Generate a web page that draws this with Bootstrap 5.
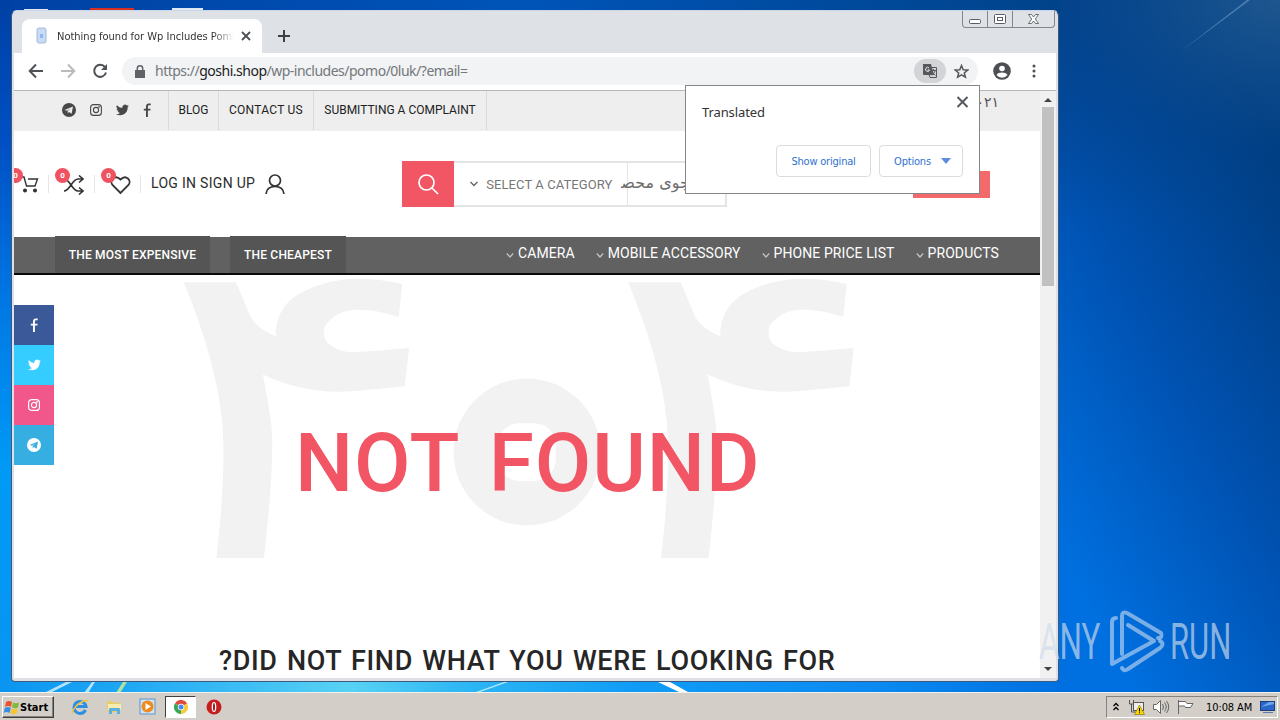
<!DOCTYPE html>
<html lang="en">
<head>
  <meta charset="UTF-8" />
  <meta name="viewport" content="width=device-width, initial-scale=1.0" />
  <title>Nothing found for Wp Includes Pomo</title>
  <link href="https://cdn.jsdelivr.net/npm/bootstrap@5.3.0/dist/css/bootstrap.min.css" rel="stylesheet" />
  <style>
    body {
      width: 1280px;
      height: 720px;
      overflow: hidden;
      font-family: Roboto, "DejaVu Sans", sans-serif;
      font-size: 14px;
      line-height: 1;
      color: #222;
      white-space: nowrap;
    }
    svg { display: block; flex: none; }
    .desktop { width: 1280px; height: 720px; }
    .wallpaper { z-index: 0; }
    .ui-font { font-family: "DejaVu Sans Condensed", "DejaVu Sans", sans-serif; }

    /* browser window */
    .win {
      width: 1048px; height: 672px; margin: 10px 0 0 11px;
      background: #dfe0e3; border: 1px solid #3c5a80; border-top-color: #c9d6ea;
      border-radius: 6px 6px 4px 4px; padding: 0 2px 3px 2px; z-index: 1;
    }
    .tabstrip { height: 42px; background: #dee1e6; border-radius: 5px 5px 0 0; }
    .tab { width: 240px; height: 34px; margin: 8px 0 0 8px; border-radius: 8px 8px 0 0; background: #fff; padding: 0 10px 0 13px; }
    .tab-title { width: 177px; font-size: 11px; line-height: 16px; padding-top: 1px; margin-left: 9px; color: #333; -webkit-mask-image: linear-gradient(90deg, #000 88%, transparent); }
    .caption { top: 0; right: 1px; width: 93px; height: 17px; border: 1px solid #84878d; border-top: 0; border-radius: 0 0 4px 4px; }
    .caption > div { width: 25px; border-right: 1px solid #84878d; }
    .caption > div:last-child { width: 42px; border-right: 0; }
    .toolbar { height: 38px; background: #fff; border-bottom: 1px solid #b6b6b6; padding-bottom: 1px; }
    .omnibox { width: 856px; height: 28px; margin-left: 14px; border-radius: 14px; background: #f1f3f4; padding: 0 9px 0 13px; }
    .url { font-family: "Noto Sans", sans-serif; font-size: 14px; letter-spacing: -.5px; color: #74777b; margin-left: 10px; }
    .url b { font-weight: 400; color: #222; }
    .translate-chip { width: 32px; height: 24px; border-radius: 12px; background: #d2d4d6; }

    /* page */
    .page { width: 1026px; height: 587px; background: #fff; }
    .topbar { height: 40px; background: #eee; font-size: 12px; }
    .topbar .cell { border-right: 1px solid #dadada; height: 39px; padding-bottom: 1px; }
    .socials { width: 155px; padding-left: 48px; gap: 14px; }
    .phone { margin-right: 41px; padding-top: 4px; font: 14px "DejaVu Sans", sans-serif; line-height: 14px; color: #555; }
    .head { height: 106px; }
    .count { width: 15px; height: 15px; border-radius: 50%; background: #ef5361; color: #fff; font-size: 8px; font-weight: 700; top: -7px; left: 6px; }
    .tool { border-right: 1px solid #e6e6e6; height: 18px; width: 46px; padding-left: 15px; }
    .tool:first-child { width: 35px; padding-left: 7px; }
    .tool:first-child .count { left: -6px; }
    .login { margin: -3px 0 0 10px; letter-spacing: .3px; color: #2c2c2c; }
    .search { width: 325px; height: 46px; border: 2px solid #e4e4e4; border-left: 0; margin-left: 117px; }
    .search-btn { width: 52px; height: 46px; background: #f25563; margin-top: -2px; }
    .cat { width: 174px; height: 42px; border-right: 1px solid #e4e4e4; color: #777; font-size: 13px; padding-left: 16px; letter-spacing: .08px; }
    .field { width: 98px; height: 42px; margin-left: -7px; color: #6d6d6d; font: 16px "DejaVu Sans", sans-serif; line-height: 40px; }
    .logo-bar { width: 77px; height: 27px; background: #f26a6c; margin: 0 50px 0 auto; }
    .menubar { height: 38px; background: #616161; border-bottom: 2px solid #0a0a0a; color: #fff; padding: 0 41px; }
    .dark-btn { width: 155px; height: 37px; margin-top: -1px; background: #555; font-size: 12px; font-weight: 500; letter-spacing: .18px; }
    .dark-btn + .dark-btn { width: 116px; margin-left: 20px; }
    .menu { margin-top: -4px; letter-spacing: .08px; }
    .menu > div { margin-left: 21px; gap: 4px; }
    .share { top: 214px; left: 0; width: 40px; }
    .share > div { height: 40px; }
    .big { top: 184px; left: 0; }
    .not-found { color: #f25563; font-weight: 500; font-size: 82px; letter-spacing: .9px; word-spacing: 9px; margin: 146px 0 0 281px; line-height: 84px; }
    .did { font-weight: 500; font-size: 27px; letter-spacing: .63px; word-spacing: 2px; color: #262626; margin: 140px 0 0 205px; line-height: 32px; }

    .scroller { width: 16px; background: #f1f1f1; }
    .thumb { width: 12px; height: 179px; background: #c1c1c1; }

    .bubble { left: 673px; top: 74px; width: 295px; height: 109px; background: #fff; border: 1px solid #868686; z-index: 3; }
    .bubble-top { padding: 9px 10px 0 16px; }
    .bubble-title { font: 13px "Noto Sans", sans-serif; letter-spacing: -.1px; color: #333; padding-top: 8px; }
    .bubble-row { padding: 0 16px 16px 0; }
    .bubble-btn { width: 95px; height: 32px; border: 1px solid #dadce0; border-radius: 4px; color: #2f72d0; font-size: 11px; letter-spacing: -.2px; }
    .bubble-btn + .bubble-btn { width: 84px; gap: 10px; padding-left: 3px; }

    /* taskbar */
    .taskbar { height: 28px; margin-top: auto; background: #d4cec8; border-top: 1px solid #f4f1ec; z-index: 2; }
    .start { width: 52px; height: 22px; margin: 3px 0 0 2px; border: 1px solid; border-color: #fff #404040 #404040 #fff; box-shadow: inset -1px -1px 0 #87837c; font: bold 11px "DejaVu Sans Condensed", sans-serif; color: #000; }
    .quick { margin-left: 17px; gap: 16px; }
    .task { width: 31px; height: 22px; margin: 3px 0 0 9px; background: #fff; border: 1px solid; border-color: #404040 #fff #fff #404040; }
    .tray { width: 172px; height: 22px; margin: 3px 2px 0 auto; border: 1px solid; border-color: #87837c #fff #fff #87837c; font-size: 11px; letter-spacing: -.1px; color: #000; }
    .watermark { left: 1036px; top: 604px; z-index: 5; }
  </style>
</head>
<body>
<div class="desktop position-relative d-flex flex-column">

  <!-- wallpaper -->
  <svg class="wallpaper position-absolute top-0 start-0" width="1280" height="720">
    <defs>
      <linearGradient id="sky" gradientUnits="userSpaceOnUse" x1="1060" y1="560" x2="1398" y2="374">
        <stop offset="0" stop-color="#0070e0"/><stop offset=".5" stop-color="#0051b0"/><stop offset="1" stop-color="#003d80"/>
      </linearGradient>
      <linearGradient id="left" x1="0" y1="0" x2="0" y2="1">
        <stop offset="0" stop-color="#0040a4"/><stop offset=".2" stop-color="#0050c4"/><stop offset=".42" stop-color="#0078e4"/><stop offset=".65" stop-color="#009af6"/><stop offset="1" stop-color="#0a94f0"/>
      </linearGradient>
      <linearGradient id="topg"><stop offset="0" stop-color="#0041a4"/><stop offset=".5" stop-color="#0054b8"/><stop offset="1" stop-color="#00438a"/></linearGradient>
      <linearGradient id="bot">
        <stop offset="0" stop-color="#0a94f0"/><stop offset=".12" stop-color="#1fa8f4"/><stop offset=".33" stop-color="#58d2f4"/><stop offset=".44" stop-color="#2cb6f4"/><stop offset=".6" stop-color="#109cf6"/><stop offset=".84" stop-color="#0a88f0"/><stop offset="1" stop-color="#0070e0"/>
      </linearGradient>
      <linearGradient id="topshade" x1="0" y1="0" x2="0" y2="1"><stop offset="0" stop-color="#04438c"/><stop offset="1" stop-color="#04438c" stop-opacity="0"/></linearGradient>
      <radialGradient id="glow" cx="1" cy="0" r="1"><stop offset="0" stop-color="#3a6a90" stop-opacity=".5"/><stop offset="1" stop-color="#1c5a90" stop-opacity="0"/></radialGradient>
    </defs>
    <rect width="1280" height="720" fill="url(#sky)"/>
    <rect x="1058" width="222" height="220" fill="url(#topshade)"/>
    <rect x="1060" width="220" height="150" fill="url(#glow)"/>
    <rect width="1060" height="12" fill="url(#topg)"/>
    <rect width="13" height="720" fill="url(#left)"/>
    <rect y="682" width="1060" height="12" fill="url(#bot)"/>
    <path d="M1247 0 1180 52 1250 0Z" fill="#6e9cc8" opacity=".6"/>
    <path d="M44 693 66 682h6L50 693ZM84 693 92 682h3l-7 11ZM476 692l28-10h4l-28 10Z" fill="#d8f4ff" opacity=".8"/>
    <path d="M116 693l7-11h4l-7 11Z" fill="#d8f08a" opacity=".8"/>
    <path d="M658 682h12l18 10h-9Z" fill="#fff"/>
    <path d="M24 9h24v1H24ZM172 8h31v2h-31Z" fill="#dfe7f2"/><path d="M90 8h44v2H90Z" fill="#d83020"/>
  </svg>

  <div class="win position-relative">
    <div class="tabstrip d-flex position-relative">
      <div class="tab d-flex align-items-center ui-font">
        <svg width="13" height="18"><rect x="2" y="1" width="9" height="15" rx="2" fill="#c9dcf4" stroke="#a3b8dc"/><path d="M5 7h3v4H5z" fill="#8fb8f0"/></svg>
        <div class="tab-title overflow-hidden">Nothing found for Wp Includes Pomo</div>
        <svg class="ms-auto" width="12" height="12" stroke="#4c4f53" stroke-width="1.800"><path d="M2 2l8 8M10 2l-8 8"/></svg>
      </div>
      <svg class="mt-3 ms-3" width="14" height="18" stroke="#3c4043" stroke-width="2"><path d="M6 3v12M0 9h12"/></svg>
      <div class="caption d-flex position-absolute">
        <div><svg width="24" height="16" fill="#fff" stroke="#5a5d63"><rect x="6.500" y="8.500" width="11" height="4" rx="1"/></svg></div>
        <div><svg width="24" height="16" fill="#fff" stroke="#5a5d63"><rect x="6.500" y="3.500" width="11" height="9" rx="1"/><rect x="9.500" y="6.500" width="5" height="3"/></svg></div>
        <div><svg width="41" height="16" fill="#fff" stroke="#5a5d63" stroke-width=".9"><path d="M15.500 3.500h3l2 2.500 2-2.500h3l-3.200 4.500 3.200 4.500h-3l-2-2.500-2 2.500h-3l3.200-4.500z"/></svg></div>
      </div>
    </div>

    <div class="toolbar d-flex align-items-center">
      <div class="d-flex gap-3 ps-3">
        <svg style="margin-left:-2px" width="16" height="16" fill="none" stroke="#4f5256" stroke-width="2"><path d="M15 8H2M8 1.500 1.700 8 8 14.500"/></svg>
        <svg width="16" height="16" fill="none" stroke="#b9bbbd" stroke-width="2"><path d="M1 8h13M8 1.500 14.300 8 8 14.500"/></svg>
        <svg width="16" height="16" fill="none" stroke="#4f5256" stroke-width="2"><path d="M13 4.200A6 6 0 1 0 14 9.500"/><path d="M15 1v6H9z" fill="#4f5256" stroke="none"/></svg>
      </div>
      <div class="omnibox d-flex align-items-center">
        <svg width="10" height="13"><path d="M0 5h10v8H0z" fill="#5f6368"/><path d="M2.300 5V3.500a2.700 2.700 0 0 1 5.400 0V5" fill="none" stroke="#5f6368" stroke-width="1.500"/></svg>
        <div class="url">https://<b>goshi.shop</b>/wp-includes/pomo/0luk/?email=</div>
        <div class="translate-chip d-flex align-items-center justify-content-center ms-auto">
          <svg width="16" height="16"><path d="M1 1h8l3 11H2a1 1 0 0 1-1-1z" fill="#55585c"/><path d="M7 4.500h7.500v10H8l-1-3" fill="none" stroke="#55585c"/><path d="M9 7.500h5M11.500 6v1.500M13 8c-.5 2-2 3.500-3.500 4M10 9l3.500 3.500" stroke="#55585c" fill="none"/><path d="M7 5a2 2 0 1 0 .5 2H5.700" fill="none" stroke="#eee"/></svg>
        </div>
        <svg class="ms-2" width="15" height="15" viewBox="0 0 15 15" fill="none" stroke="#55585c" stroke-width="1.500"><path d="M7.500 1.500 9.200 5.700l4.500.3-3.400 2.900 1.100 4.300-3.900-2.400-3.900 2.400 1.100-4.300L1.300 6l4.500-.3z"/></svg>
      </div>
      <svg style="margin-left:15px" width="18" height="18"><circle cx="9" cy="9" r="8.800" fill="#4c4f54"/><circle cx="9" cy="6.500" r="2.800" fill="#fff"/><path d="M3.500 13c2-3.200 9-3.200 11 0a7 7 0 0 1-11 0z" fill="#fff"/></svg>
      <svg style="margin-left:21px" width="4" height="14" fill="#4c4f54"><circle cx="2" cy="2" r="1.500"/><circle cx="2" cy="7" r="1.500"/><circle cx="2" cy="12" r="1.500"/></svg>
    </div>

    <div class="d-flex">
      <div class="page position-relative overflow-hidden">
        <!-- backdrop number -->
        <svg class="big position-absolute" width="1026" height="300" fill="#f2f2f2" font-family="DejaVu Sans" font-size="370">
          <text transform="translate(117 283) skewX(-6.400) scale(1.460 1.174)">۴</text>
          <circle cx="513" cy="177" r="73.500"/>
          <text x="488" y="200" font-size="81" font-weight="700" fill="#fff" stroke="#fff" stroke-width="44" stroke-linejoin="round">۰</text>
          <text transform="translate(561.600 283) skewX(-6.400) scale(1.460 1.174)">۴</text>
        </svg>

        <div class="topbar d-flex position-relative">
          <div class="cell socials d-flex align-items-center">
            <svg width="14" height="14" viewBox="0 0 14 14"><circle cx="7" cy="7" r="7" fill="#484848"/><path d="M2.500 7 11 3.500 9.600 10.800 7 9l-1.300 1.300V8l3-2.600L5 7.800z" fill="#eee"/></svg>
            <svg width="12" height="12" viewBox="0 0 12 12" fill="none" stroke="#484848" stroke-width="1.100"><rect x=".6" y=".6" width="10.800" height="10.800" rx="3"/><circle cx="6" cy="6" r="2.600"/><circle cx="9.100" cy="2.900" r=".3"/></svg>
            <svg width="13" height="12" viewBox="0 0 24 20" fill="#484848"><path d="M24 2.400a10 10 0 0 1-2.800.8A5 5 0 0 0 23.300.4a10 10 0 0 1-3.100 1.200 4.900 4.900 0 0 0-8.400 4.500A14 14 0 0 1 1.700 1a4.900 4.900 0 0 0 1.500 6.600A4.900 4.900 0 0 1 1 7a5 5 0 0 0 3.900 4.900 5 5 0 0 1-2.200.1 4.900 4.900 0 0 0 4.600 3.400A9.900 9.900 0 0 1 0 17.500 14 14 0 0 0 21.500 5z"/></svg>
            <svg width="9" height="14" viewBox="0 0 9 14" fill="#484848"><path d="M3 14V7.500H.8V5.800H3V3.600C3 1.500 4.100.5 5.800.5h1.900v1.700H6.300c-1 0-1.400.5-1.400 1.400v2.200h2.700l-.3 1.700H4.900V14z"/></svg>
          </div>
          <div class="cell d-flex align-items-center justify-content-center" style="width:50px">BLOG</div>
          <div class="cell d-flex align-items-center justify-content-center" style="width:95px;letter-spacing:.26px">CONTACT US</div>
          <div class="cell d-flex align-items-center justify-content-center" style="width:173px">SUBMITTING A COMPLAINT</div>
          <div class="phone ms-auto" dir="rtl">۰۲۱</div>
        </div>

        <div class="head d-flex align-items-center position-relative">
          <div class="tool position-relative">
            <svg width="18" height="18" viewBox="0 0 18 18" fill="none" stroke="#333" stroke-width="1.400"><path d="M1 2h2l2.500 9h8.500L16.500 4H7"/><circle cx="4" cy="15.500" r="1.300" fill="#333"/><circle cx="14" cy="15.500" r="1.300" fill="#333"/></svg>
            <div class="count position-absolute d-flex align-items-center justify-content-center">0</div>
          </div>
          <div class="tool position-relative">
            <svg width="20" height="20" viewBox="0 0 20 20" fill="none" stroke="#333" stroke-width="1.600"><path d="M0 16c6 0 8-12 14-12h5M0 4c6 0 8 12 14 12h5M15 .5 19 4l-4 3.500M15 12.500l4 3.500-4 3.500"/></svg>
            <div class="count position-absolute d-flex align-items-center justify-content-center">0</div>
          </div>
          <div class="tool position-relative">
            <svg width="21" height="20" viewBox="0 0 21 20" fill="none" stroke="#333" stroke-width="1.800"><path d="M10.500 18 2.500 10C-1 5.500 5-1 10.500 4.500 16-1 22 5.500 18.500 10z"/></svg>
            <div class="count position-absolute d-flex align-items-center justify-content-center">0</div>
          </div>
          <div class="login">LOG IN SIGN UP</div>
          <svg style="margin-left:10px" width="20" height="20" viewBox="0 0 20 20" fill="none" stroke="#333" stroke-width="1.700"><circle cx="10" cy="6.500" r="5.500"/><path d="M1 20c.5-5 4-7.500 9-7.500s8.500 2.500 9 7.500"/></svg>
          <div class="search d-flex">
            <div class="search-btn d-flex align-items-center justify-content-center">
              <svg width="22" height="22" fill="none" stroke="#fff" stroke-width="1.700"><circle cx="9.500" cy="9.500" r="7.500"/><path d="M15 15l6 6"/></svg>
            </div>
            <div class="cat d-flex align-items-center gap-2">
              <svg width="8" height="6" fill="none" stroke="#666" stroke-width="1.400"><path d="M.5 1 4 4.500 7.500 1"/></svg>
              <span>SELECT A CATEGORY</span>
            </div>
            <div class="field overflow-hidden" dir="rtl">جستجوی محصولات</div>
          </div>
          <div class="logo-bar"></div>
        </div>

        <div class="menubar d-flex align-items-center position-relative">
          <div class="dark-btn d-flex align-items-center justify-content-center">THE MOST EXPENSIVE</div>
          <div class="dark-btn d-flex align-items-center justify-content-center">THE CHEAPEST</div>
          <div class="menu d-flex ms-auto" id="menu"></div>
        </div>

        <div class="not-found position-relative">NOT FOUND</div>
        <div class="did position-relative">?DID NOT FIND WHAT YOU WERE LOOKING FOR</div>

        <div class="share position-absolute">
          <div class="d-flex align-items-center justify-content-center" style="background:#3b5998"><svg width="9" height="14" viewBox="0 0 9 14" fill="#fff"><path d="M3 14V7.500H.8V5.800H3V3.600C3 1.500 4.100.5 5.800.5h1.900v1.700H6.300c-1 0-1.400.5-1.400 1.400v2.200h2.700l-.3 1.700H4.900V14z"/></svg></div>
          <div class="d-flex align-items-center justify-content-center" style="background:#35cdff"><svg width="13" height="12" viewBox="0 0 24 20" fill="#fff"><path d="M24 2.400a10 10 0 0 1-2.800.8A5 5 0 0 0 23.300.4a10 10 0 0 1-3.100 1.200 4.900 4.900 0 0 0-8.400 4.500A14 14 0 0 1 1.700 1a4.900 4.900 0 0 0 1.500 6.600A4.900 4.900 0 0 1 1 7a5 5 0 0 0 3.900 4.900 5 5 0 0 1-2.200.1 4.900 4.900 0 0 0 4.600 3.400A9.900 9.900 0 0 1 0 17.500 14 14 0 0 0 21.500 5z"/></svg></div>
          <div class="d-flex align-items-center justify-content-center" style="background:#f1578b"><svg width="12" height="12" viewBox="0 0 12 12" fill="none" stroke="#fff" stroke-width="1.200"><rect x=".6" y=".6" width="10.800" height="10.800" rx="3"/><circle cx="6" cy="6" r="2.600"/><circle cx="9.100" cy="2.900" r=".3"/></svg></div>
          <div class="d-flex align-items-center justify-content-center" style="background:#37aee2"><svg width="14" height="14" viewBox="0 0 14 14"><circle cx="7" cy="7" r="7" fill="#fff"/><path d="M2.500 7 11 3.500 9.600 10.800 7 9l-1.300 1.300V8l3-2.600L5 7.800z" fill="#37aee2"/></svg></div>
        </div>
      </div>

      <div class="scroller d-flex flex-column align-items-center">
        <svg width="16" height="16" fill="#444"><path d="M4 11l4-4 4 4z"/></svg>
        <div class="thumb"></div>
        <svg class="mt-auto" width="16" height="16" fill="#444"><path d="M4 5l4 4 4-4z"/></svg>
      </div>
    </div>

    <!-- translate bubble -->
    <div class="bubble position-absolute d-flex flex-column justify-content-between">
      <div class="bubble-top d-flex justify-content-between">
        <div class="bubble-title">Translated</div>
        <svg width="13" height="14" stroke="#55585c" stroke-width="2"><path d="M1.500 2l10 10M11.500 2l-10 10"/></svg>
      </div>
      <div class="bubble-row d-flex justify-content-end gap-2 ui-font">
        <div class="bubble-btn d-flex align-items-center justify-content-center">Show original</div>
        <div class="bubble-btn d-flex align-items-center justify-content-center">Options<svg width="10" height="6" fill="#5c8ede"><path d="M0 0h10L5 6z"/></svg></div>
      </div>
    </div>
  </div>

  <!-- watermark -->
  <svg class="watermark position-absolute" width="200" height="72" fill="#cfdcec" fill-opacity=".66" font-family="Roboto">
    <text transform="translate(3 55) scale(.63 1)" font-size="50">ANY</text>
    <text transform="translate(134 55) scale(.62 1)" font-size="50">RUN</text>
    <g fill="none" stroke="#c4d8f2" stroke-opacity=".62" stroke-width="4" stroke-linejoin="round" stroke-linecap="round"><path d="M80 14q-4 0-4 4v42l42-23-26-16"/><path d="M86 50V12q0-5 5-3l34 20q2 5-3 5"/><path d="M86 64q2 4 6 1l32-21q5-4 0-7"/></g>
  </svg>

  <!-- taskbar -->
  <div class="taskbar d-flex ui-font">
    <div class="start d-flex align-items-center">
      <svg width="17" height="17" viewBox="0 0 17 17"><path d="M3 3q3-2 6 0L8 8Q5 6 2 8z" fill="#e8552a"/><path d="M10 3.500q3 1.500 6 0L15 8.500q-3 1.500-6 0z" fill="#7fba3a"/><path d="M1.800 9q3-2 6 0l-1.200 5q-3-2-6 0z" fill="#3a8ee0"/><path d="M8.800 9.500q3 1.500 6 0l-1.200 5q-3 1.500-6 0z" fill="#f6c62c"/></svg>
      <span>Start</span>
    </div>
    <div class="quick d-flex align-items-center">
      <svg width="18" height="18" viewBox="0 0 18 18"><path d="M14.500 12A6 6 0 1 1 15 8.500H5" fill="none" stroke="#2c8fe0" stroke-width="3"/><path d="M2 15C-1 17 4 6 13 3q4-1.500 3.500 1" fill="none" stroke="#f2c43a" stroke-width="1.400"/></svg>
      <svg width="18" height="18" viewBox="0 0 18 18"><path d="M2 3h5l1 1.500h7V14H2z" fill="#e9cb68"/><path d="M3 6h13v6H3z" fill="#f8ebb0"/><path d="M4 16v-5q0-1 1-1h9q1 0 1 1v5h-3v-3H7v3z" fill="#5cb0e0"/></svg>
      <svg width="17" height="17" viewBox="0 0 17 17"><rect x="1" y="1" width="15" height="15" fill="#cfe3f5" stroke="#5a94cc"/><circle cx="8.500" cy="8.500" r="6" fill="#f08a1c"/><path d="M6.500 5l5.500 3.500-5.500 3.500z" fill="#fff"/></svg>
    </div>
    <div class="task d-flex align-items-center justify-content-center">
      <svg width="14" height="14" viewBox="0 0 14 14"><path d="M7 7 .9 3.500A7 7 0 0 1 13.100 3.500z" fill="#e04a3a"/><path d="M7 7v7A7 7 0 0 1 .9 3.500z" fill="#3aa757"/><path d="M7 7l6.100-3.500A7 7 0 0 1 7 14z" fill="#f8ca3c"/><circle cx="7" cy="7" r="3.200" fill="#fff"/><circle cx="7" cy="7" r="2.500" fill="#4a88ee"/></svg>
    </div>
    <svg style="margin:6px 0 0 10px" width="16" height="16"><circle cx="8" cy="8" r="7.500" fill="#c41e20"/><ellipse cx="8" cy="8" rx="2.300" ry="5" fill="#fff"/><ellipse cx="8" cy="8" rx="1" ry="4" fill="#a01416"/></svg>
    <div class="tray d-flex align-items-center">
      <svg style="margin-left:5px" width="8" height="10" fill="none" stroke="#000" stroke-width="1.300"><path d="M1.500 4 4 1.500 6.500 4M1.500 8 4 5.500 6.500 8"/></svg>
      <svg class="ms-2" width="17" height="16" viewBox="0 0 17 16"><rect x="5.500" y="3.500" width="10" height="8" fill="#eee" stroke="#555"/><path d="M1.500 1v4h4V1M3.500 5v8h4" fill="none" stroke="#555"/><path d="M11.500 6l5 9.500h-10z" fill="#f8d800" stroke="#806a00" stroke-width=".6"/><path d="M11 9h1v3.500h-1zM11 13.300h1v1h-1z"/></svg>
      <svg style="margin-left:7px" width="18" height="16" viewBox="0 0 18 16" fill="none" stroke="#666"><path d="M1.500 5.500h3l4-4v13l-4-4h-3z" fill="#fff"/><path d="M10.500 5q2 3 0 6M12.500 3.500q3.500 4.500 0 9M14.500 2q4.500 6 0 12"/></svg>
      <svg style="margin-left:7px" width="17" height="16" viewBox="0 0 17 16" fill="#fff" stroke="#666"><path d="M1.500 1v14M1.500 2.500h7l1.500 2h6l-2.500 4h-5l-1-1.500h-6z"/></svg>
      <span style="margin-left:12px">10:08 AM</span>
      <svg class="ms-2" width="16" height="14"><rect x=".5" y="1.500" width="14" height="9" fill="#2a66c8" stroke="#1b3f80"/><path d="M1 7l8-5h5v2z" fill="#6ea4ea"/><path d="M3 12h10v1H3z" fill="#5a7ab0"/></svg>
    </div>
  </div>
</div>

<script>
  const items = ["CAMERA", "MOBILE ACCESSORY", "PHONE PRICE LIST", "PRODUCTS"];
  document.getElementById("menu").innerHTML = items.map((name) => `
    <div class="d-flex align-items-center">
      <svg class="mt-1" width="8" height="7" fill="none" stroke="#c4c4c4" stroke-width="1.300"><path d="M.8 1.500l3.200 3.500 3.200-3.500"/></svg>
      <span>${name}</span>
    </div>`).join("");
</script>
<script src="https://cdn.jsdelivr.net/npm/bootstrap@5.3.0/dist/js/bootstrap.bundle.min.js"></script>
</body>
</html>
